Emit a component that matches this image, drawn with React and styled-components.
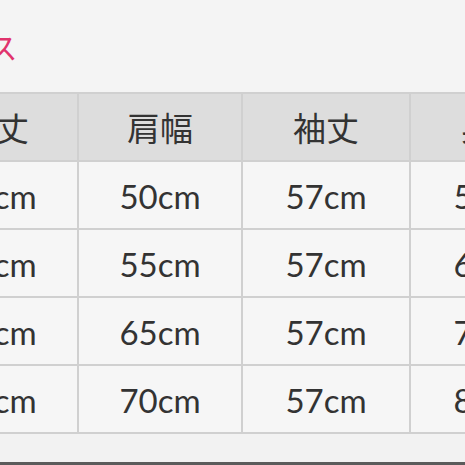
import React from "react";
import styled, { createGlobalStyle } from "styled-components";

const Global = createGlobalStyle`
  html, body { margin: 0; padding: 0; background: #f4f4f4; }
  body { font-family: Lato, "Noto Sans CJK JP", sans-serif; }
`;

const Page = styled.div`
  width: 465px;
  height: 465px;
  overflow: hidden;
  background: #f4f4f4;
  display: flex;
  flex-direction: column;
`;

const Title = styled.div`
  margin: 31px 0 0 -129px;
  height: 61px;
  font-family: "Noto Sans CJK JP", sans-serif;
  font-size: 30px;
  line-height: 30px;
  color: #e0336c;
  white-space: nowrap;
`;

const Grid = styled.div`
  margin-left: -87px;
  display: grid;
  grid-template-columns: 162px 162px 166px 166px;
  grid-auto-rows: 66px;
  gap: 2px;
  padding: 2px;
  background: #d0d0d0;
  width: max-content;
`;

const Cell = styled.div`
  display: flex;
  align-items: center;
  justify-content: center;
  background: ${(p) => (p.$head ? "#dddddd" : "#f6f6f6")};
  color: #333333;
  font-family: Lato, "Noto Sans CJK JP", sans-serif;
  font-size: 33px;
  padding-top: ${(p) => (p.$head ? "0" : "2px")};
  white-space: nowrap;
`;

const Footer = styled.div`
  flex: 1;
  background: #f2f2f2;
  border-bottom: 3px solid #5b5b5b;
`;

const head = ["着丈", "肩幅", "袖丈", "身幅"];
const rows = [
  ["68cm", "50cm", "57cm", "58cm"],
  ["70cm", "55cm", "57cm", "63cm"],
  ["72cm", "65cm", "57cm", "70cm"],
  ["74cm", "70cm", "57cm", "80cm"],
];

export default function App() {
  return (
    <Page>
      <Global />
      <Title>レディース</Title>
      <Grid>
        {head.map((h) => (
          <Cell key={h} $head>
            {h}
          </Cell>
        ))}
        {rows.map((r, i) =>
          r.map((v, j) => <Cell key={`${i}-${j}`}>{v}</Cell>)
        )}
      </Grid>
      <Footer />
    </Page>
  );
}
